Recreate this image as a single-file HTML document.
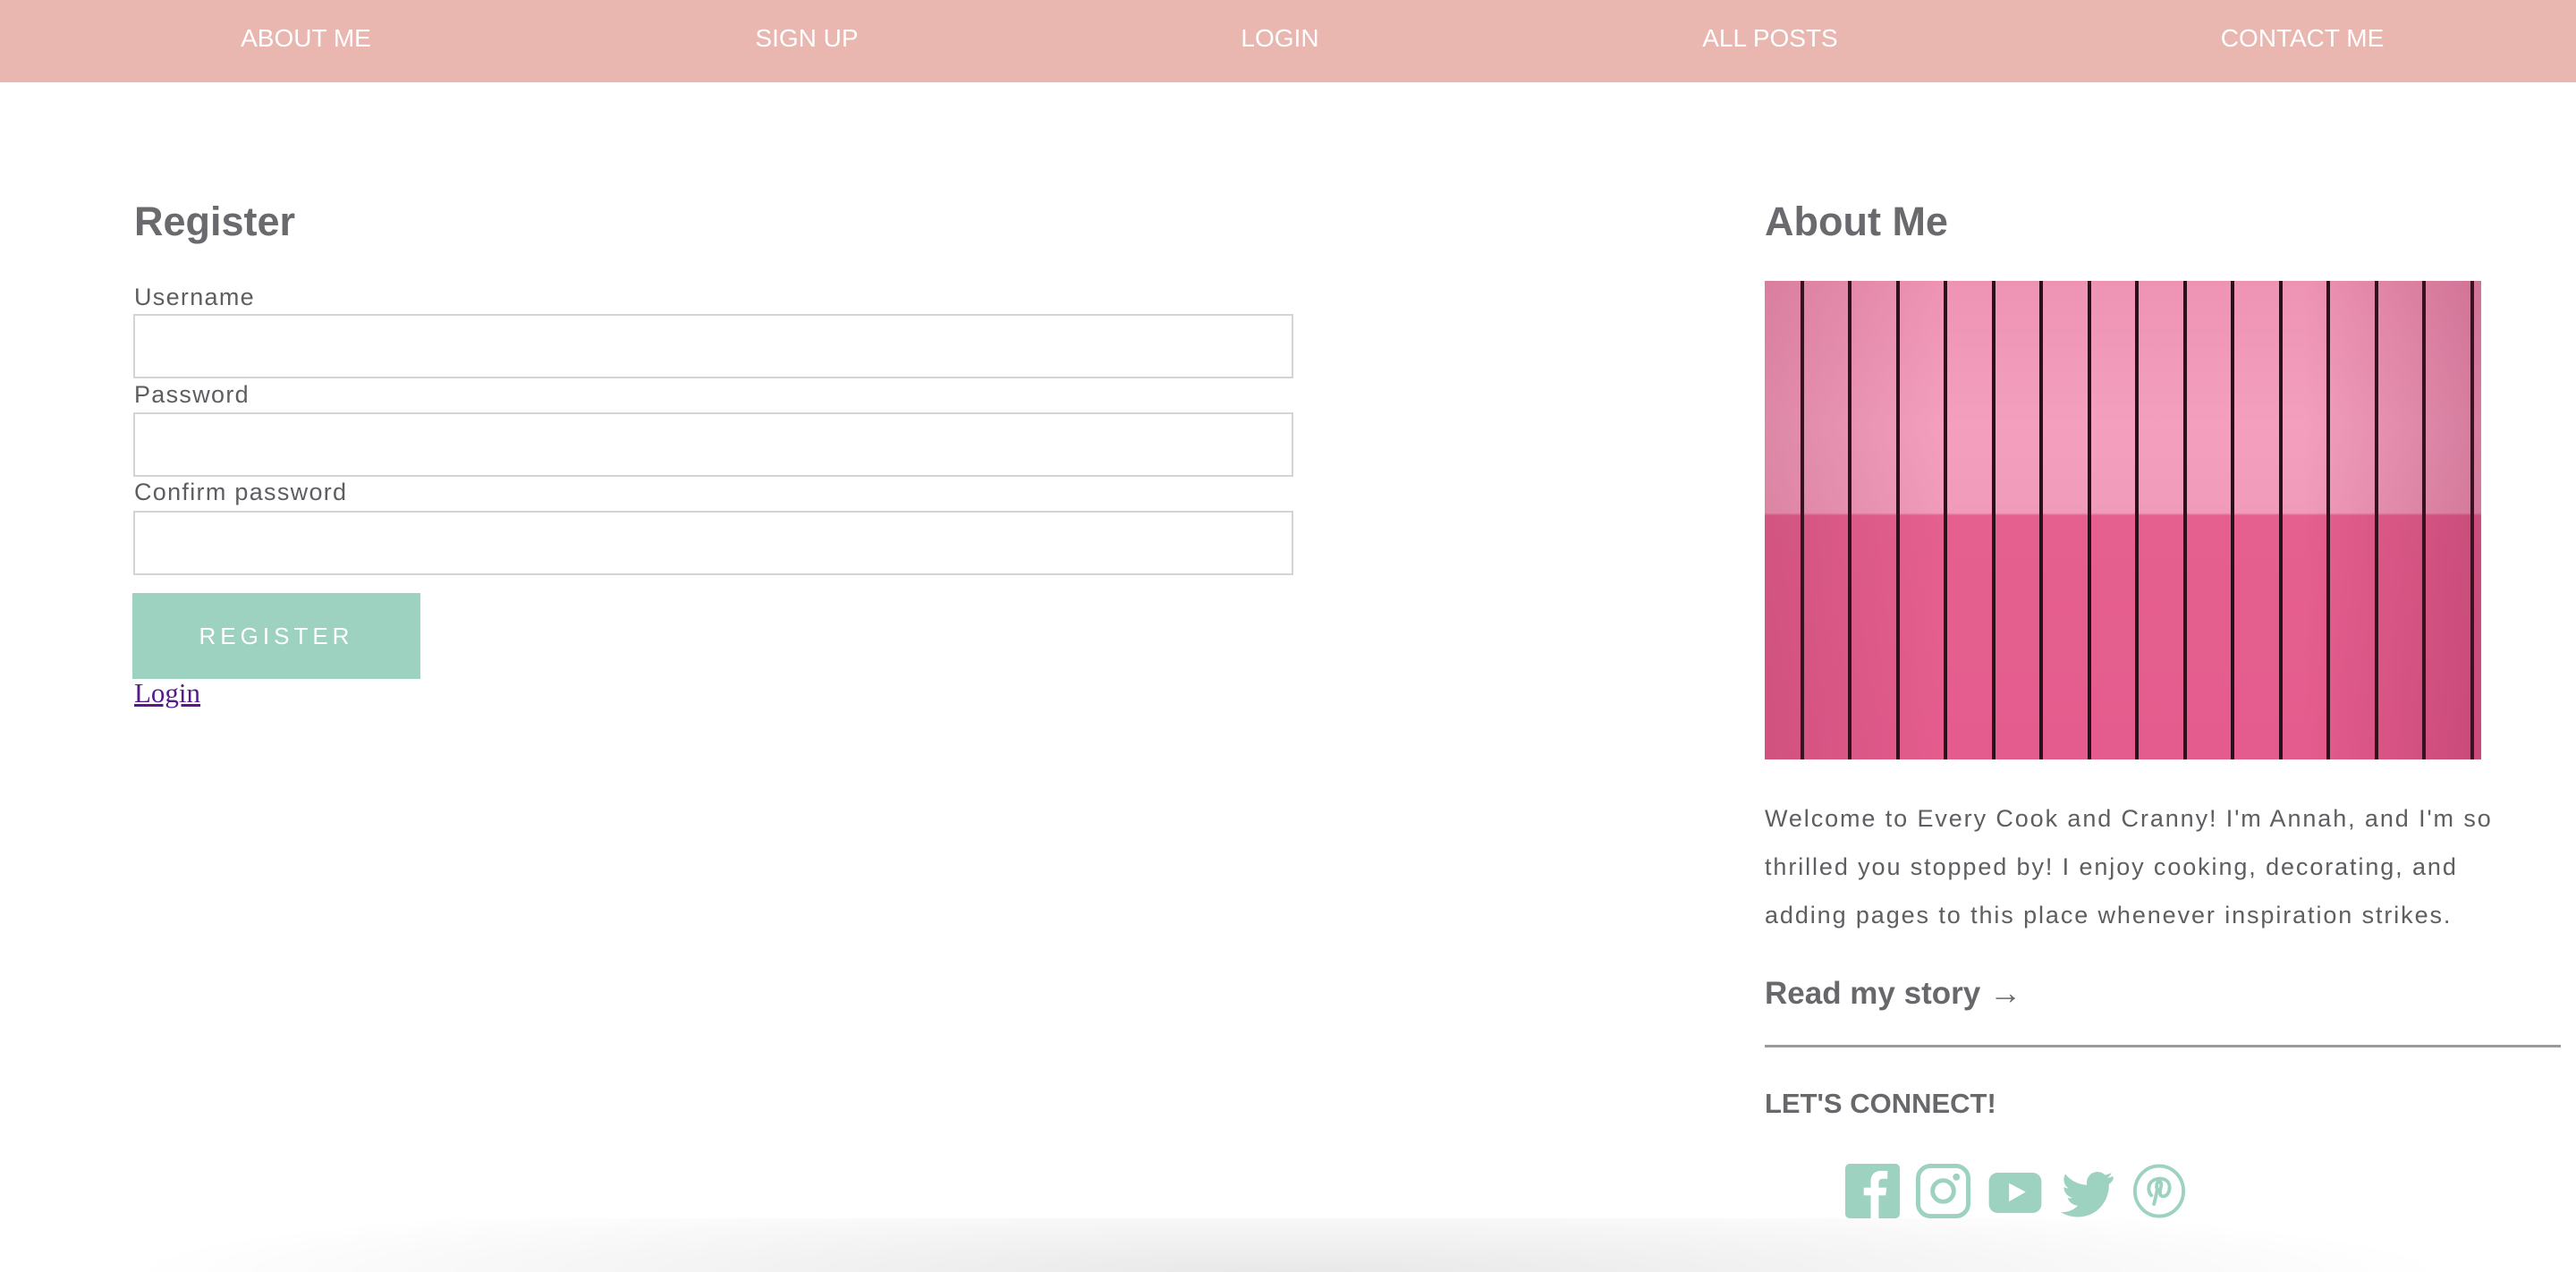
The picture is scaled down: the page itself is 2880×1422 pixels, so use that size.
<!DOCTYPE html>
<html><head><meta charset="utf-8"><style>
*{margin:0;padding:0;box-sizing:border-box}
html,body{width:2880px;height:1422px;overflow:hidden;background:#fff;font-family:"Liberation Sans",sans-serif;color:#68686c}
.wrap{position:relative;width:2880px;height:1422px;overflow:hidden}
.nav{position:absolute;left:0;top:0;width:2880px;height:92px;background:#eab6b0}
.nav span{position:absolute;top:27px;font-size:28px;color:#fff;transform:translateX(-50%);white-space:nowrap}
.h{position:absolute;font-size:45px;font-weight:bold;color:#6a6a6e}
.lbl{position:absolute;left:150px;font-size:27px;letter-spacing:1.3px;color:#5e5e62}
.inp{position:absolute;left:149px;width:1297px;height:72px;border:2px solid #d4d4d4}
.btn{position:absolute;left:148px;top:663px;width:322px;height:96px;background:#9dd1c0;color:#fff;font-size:26px;letter-spacing:5px;text-align:center;line-height:96px}
.login{position:absolute;left:150px;top:757px;font-family:"Liberation Serif",serif;font-size:31px;color:#551a8b;text-decoration:underline}
.img{position:absolute;left:1973px;top:314px;width:801px;height:535px;overflow:hidden;background:linear-gradient(180deg,#ee93b4 0%,#f49fbe 30%,#f19bba 48.5%,#e5608f 49%,#e45c8d 100%)}
.img:after{content:"";position:absolute;inset:0;background:linear-gradient(90deg,rgba(120,30,60,.18),rgba(0,0,0,0) 25%,rgba(0,0,0,0) 75%,rgba(120,20,60,.25))}
.img i{position:absolute;top:0;width:4px;height:100%;background:#2a1018}
.p{position:absolute;left:1973px;top:888px;font-size:27px;line-height:54px;letter-spacing:1.9px;color:#5e5e62;white-space:nowrap}
.read{position:absolute;left:1973px;top:1089px;font-size:35px;font-weight:bold;color:#68686c}
.hr{position:absolute;left:1973px;top:1168px;width:890px;height:3px;background:#9a9a9a}
.conn{position:absolute;left:1973px;top:1216px;font-size:31px;font-weight:bold;color:#68686c}
.ic{position:absolute;top:1301px}
.shadow{position:absolute;left:0;top:1362px;width:2880px;height:60px;background:radial-gradient(ellipse 1300px 90px at 1440px 100%,rgba(0,0,0,.09),rgba(0,0,0,0))}
</style></head><body><div class="wrap">
<div class="nav">
<span style="left:342px">ABOUT ME</span>
<span style="left:902px">SIGN UP</span>
<span style="left:1431px">LOGIN</span>
<span style="left:1979px">ALL POSTS</span>
<span style="left:2574px">CONTACT ME</span>
</div>

<div class="h" style="left:150px;top:222px">Register</div>
<div class="lbl" style="top:317px">Username</div>
<div class="inp" style="top:351px"></div>
<div class="lbl" style="top:426px">Password</div>
<div class="inp" style="top:461px"></div>
<div class="lbl" style="top:535px">Confirm password</div>
<div class="inp" style="top:571px"></div>
<div class="btn">REGISTER</div>
<a class="login">Login</a>

<div class="h" style="left:1973px;top:222px">About Me</div>
<div class="img">
<i style="left:40px"></i><i style="left:93px"></i><i style="left:147px"></i><i style="left:200px"></i><i style="left:254px"></i><i style="left:307px"></i><i style="left:361px"></i><i style="left:414px"></i><i style="left:468px"></i><i style="left:521px"></i><i style="left:575px"></i><i style="left:628px"></i><i style="left:682px"></i><i style="left:735px"></i><i style="left:789px"></i>
</div>
<div class="p">Welcome to Every Cook and Cranny! I'm Annah, and I'm so<br>thrilled you stopped by! I enjoy cooking, decorating, and<br>adding pages to this place whenever inspiration strikes.</div>
<div class="read">Read my story <b style="font-size:36px">→</b></div>
<div class="hr"></div>
<div class="conn">LET'S CONNECT!</div>

<svg class="ic" style="left:2063px" width="61" height="61" viewBox="0 0 62 62"><rect x="0" y="0" width="62" height="62" rx="5" fill="#9dd1c0"/><path d="M29 62V36h-8v-9h8v-7c0-8 5-12 12-12h7v9h-5c-4 0-5 2-5 5v5h9l-1 9h-8v26z" fill="#fff"/></svg>
<svg class="ic" style="left:2142px" width="61" height="61" viewBox="0 0 62 62"><rect x="2.5" y="2.5" width="57" height="57" rx="14" fill="none" stroke="#9dd1c0" stroke-width="5"/><circle cx="31" cy="31" r="12" fill="none" stroke="#9dd1c0" stroke-width="5"/><circle cx="46" cy="15" r="4" fill="#9dd1c0"/></svg>
<svg class="ic" style="left:2223px;top:1311px" width="60" height="45" viewBox="0 0 60 46"><rect x="0" y="0" width="60" height="46" rx="10" fill="#9dd1c0"/><path d="M23 12v21l19-11z" fill="#fff"/></svg>
<svg class="ic" style="left:2303px;top:1309px" width="60" height="52" viewBox="0 0 60 52"><path d="M59 6c-2 1-4 1.5-6 2 2-1.5 4-3.5 4.5-6-2 1.2-4.5 2-7 2.5A12 12 0 0 0 30 13c0 1 0 2 .3 2.8C20.5 15.3 11.8 10.6 6 3.5c-1 1.8-1.6 3.8-1.6 6 0 4.2 2.1 8 5.4 10-2 0-3.8-.6-5.4-1.5 0 6 4.2 11 9.8 12-1 .3-2.1.5-3.2.5-.8 0-1.6-.1-2.3-.2 1.6 4.8 6.1 8.4 11.5 8.5A24.7 24.7 0 0 1 1 46c5.4 3.5 11.9 5.5 18.8 5.5 22.6 0 35-18.7 35-35v-1.6c2.4-1.7 4.4-3.9 5.2-6.4z" fill="#9dd1c0"/></svg>
<svg class="ic" style="left:2384px" width="60" height="61" viewBox="0 0 62 62"><ellipse cx="31" cy="31" rx="28" ry="29" fill="none" stroke="#9dd1c0" stroke-width="4"/><path d="M22 36c-3-3-4-8-2-13 3-6 12-8 18-5 6 3 6 11 3 16-2 3-6 4-8 2-2-2-1-6 0-10 1-3 0-6-2-6s-3 3-3 6c0 2 1 3 1 3l-4 17" fill="none" stroke="#9dd1c0" stroke-width="4" stroke-linecap="round" stroke-linejoin="round"/></svg>

<div class="shadow"></div>
</div></body></html>
